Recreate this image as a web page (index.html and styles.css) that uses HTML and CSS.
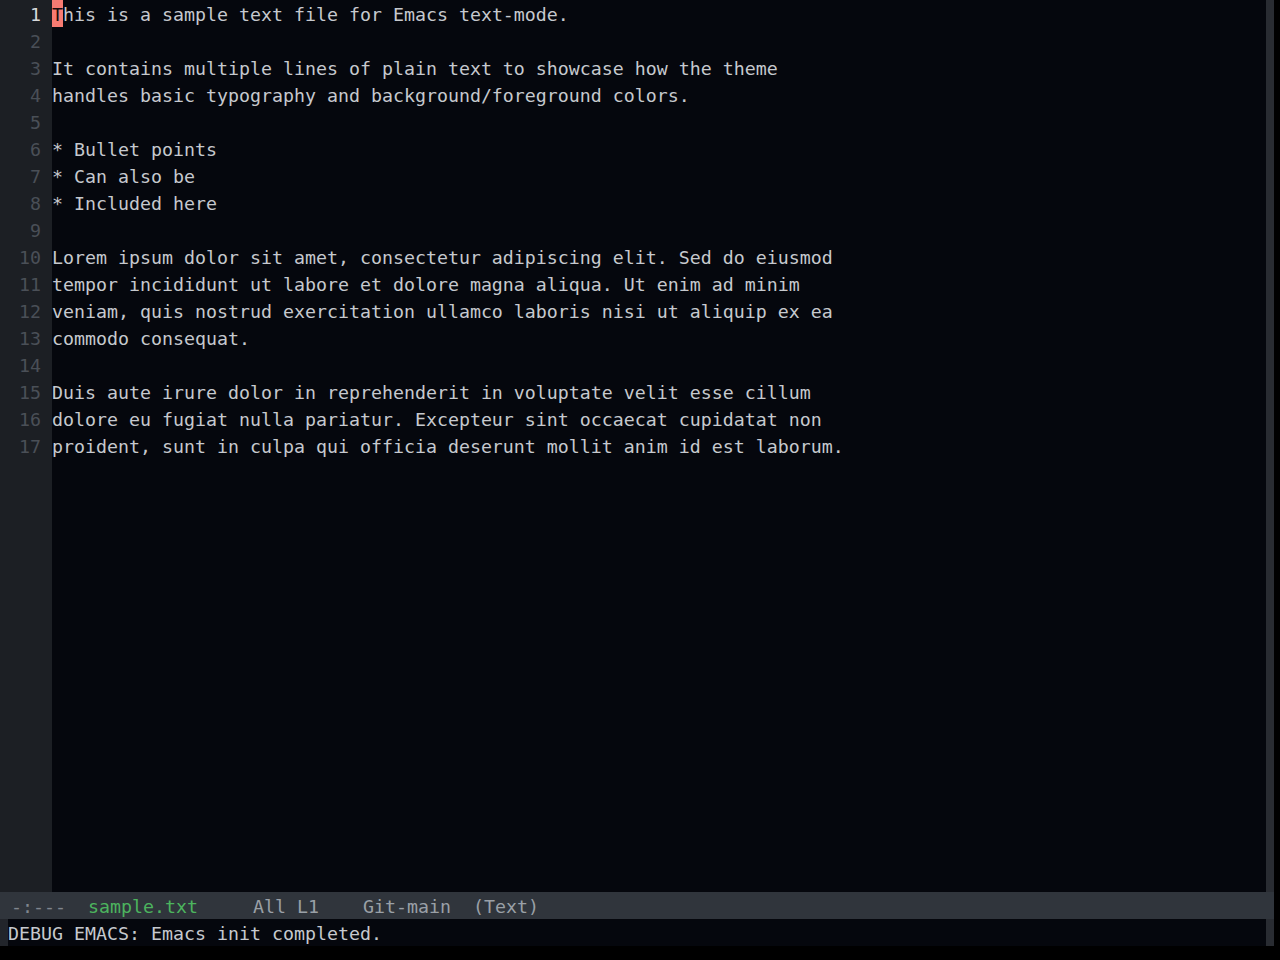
FILE: index.html
```html
<!DOCTYPE html>
<html lang="en">
<head>
  <meta charset="UTF-8">
  <title>sample.txt - Emacs</title>
  <link rel="stylesheet" href="styles.css">
</head>
<body>
  <div class="frame">
    <div class="window">
      <div class="gutter">
        <div class="num current">1</div>
        <div class="num">2</div>
        <div class="num">3</div>
        <div class="num">4</div>
        <div class="num">5</div>
        <div class="num">6</div>
        <div class="num">7</div>
        <div class="num">8</div>
        <div class="num">9</div>
        <div class="num">10</div>
        <div class="num">11</div>
        <div class="num">12</div>
        <div class="num">13</div>
        <div class="num">14</div>
        <div class="num">15</div>
        <div class="num">16</div>
        <div class="num">17</div>
      </div>
      <div class="buffer">
        <div class="line"><span class="cursor">T</span>his is a sample text file for Emacs text-mode.</div>
        <div class="line"></div>
        <div class="line">It contains multiple lines of plain text to showcase how the theme</div>
        <div class="line">handles basic typography and background/foreground colors.</div>
        <div class="line"></div>
        <div class="line">* Bullet points</div>
        <div class="line">* Can also be</div>
        <div class="line">* Included here</div>
        <div class="line"></div>
        <div class="line">Lorem ipsum dolor sit amet, consectetur adipiscing elit. Sed do eiusmod</div>
        <div class="line">tempor incididunt ut labore et dolore magna aliqua. Ut enim ad minim</div>
        <div class="line">veniam, quis nostrud exercitation ullamco laboris nisi ut aliquip ex ea</div>
        <div class="line">commodo consequat.</div>
        <div class="line"></div>
        <div class="line">Duis aute irure dolor in reprehenderit in voluptate velit esse cillum</div>
        <div class="line">dolore eu fugiat nulla pariatur. Excepteur sint occaecat cupidatat non</div>
        <div class="line">proident, sunt in culpa qui officia deserunt mollit anim id est laborum.</div>
      </div>
      <div class="fringe"></div>
    </div>
    <div class="modeline"><span class="ml-state"> -:---</span>  <span class="ml-buffer">sample.txt</span>     <span class="ml-info">All L1</span>    <span class="ml-info">Git-main</span>  <span class="ml-info">(Text)</span></div>
    <div class="echo">
      <div class="echo-fringe"></div>
      <div class="echo-text">DEBUG EMACS: Emacs init completed.</div>
      <div class="fringe"></div>
    </div>
  </div>
</body>
</html>
```

FILE: styles.css
```css
html, body {
  margin: 0;
  padding: 0;
  background: #000;
}
body {
  width: 1280px;
  height: 960px;
  overflow: hidden;
  font-family: "DejaVu Sans Mono", "Liberation Mono", monospace;
  font-size: 18.27px;
  /* rows are 27px; the taller line box drops glyphs 1px like Emacs does */
  line-height: 29px;
  color: #c6c9ce;
}
.frame {
  width: 1274px;
  height: 946px;
  display: flex;
  flex-direction: column;
  background: #05070d;
}
.window {
  flex: 1;
  display: flex;
  min-height: 0;
}
.gutter {
  width: 52px;
  flex-shrink: 0;
  background: #1c1f24;
  box-sizing: border-box;
  padding-right: 11px;
}
.num {
  height: 27px;
  text-align: right;
  color: #4a4f57;
}
.num.current {
  color: #d6d8db;
}
.buffer {
  flex: 1;
  background: #05070d;
}
.line {
  height: 27px;
  white-space: pre;
}
.cursor {
  display: inline-block;
  width: 11px;
  height: 27px;
  vertical-align: top;
  background: #f77b72;
  color: #1a0d0d;
}
.fringe {
  width: 8px;
  flex-shrink: 0;
  background: #292c32;
}
.modeline {
  height: 27px;
  flex-shrink: 0;
  background: #30353c;
  white-space: pre;
  color: #9aa0a7;
  overflow: hidden;
}
.ml-state {
  color: #80868e;
}
.ml-buffer {
  color: #4cb45e;
}
.echo {
  height: 27px;
  flex-shrink: 0;
  display: flex;
  overflow: hidden;
}
.echo-fringe {
  width: 8px;
  background: #22252b;
}
.echo-text {
  flex: 1;
  white-space: pre;
}
```
